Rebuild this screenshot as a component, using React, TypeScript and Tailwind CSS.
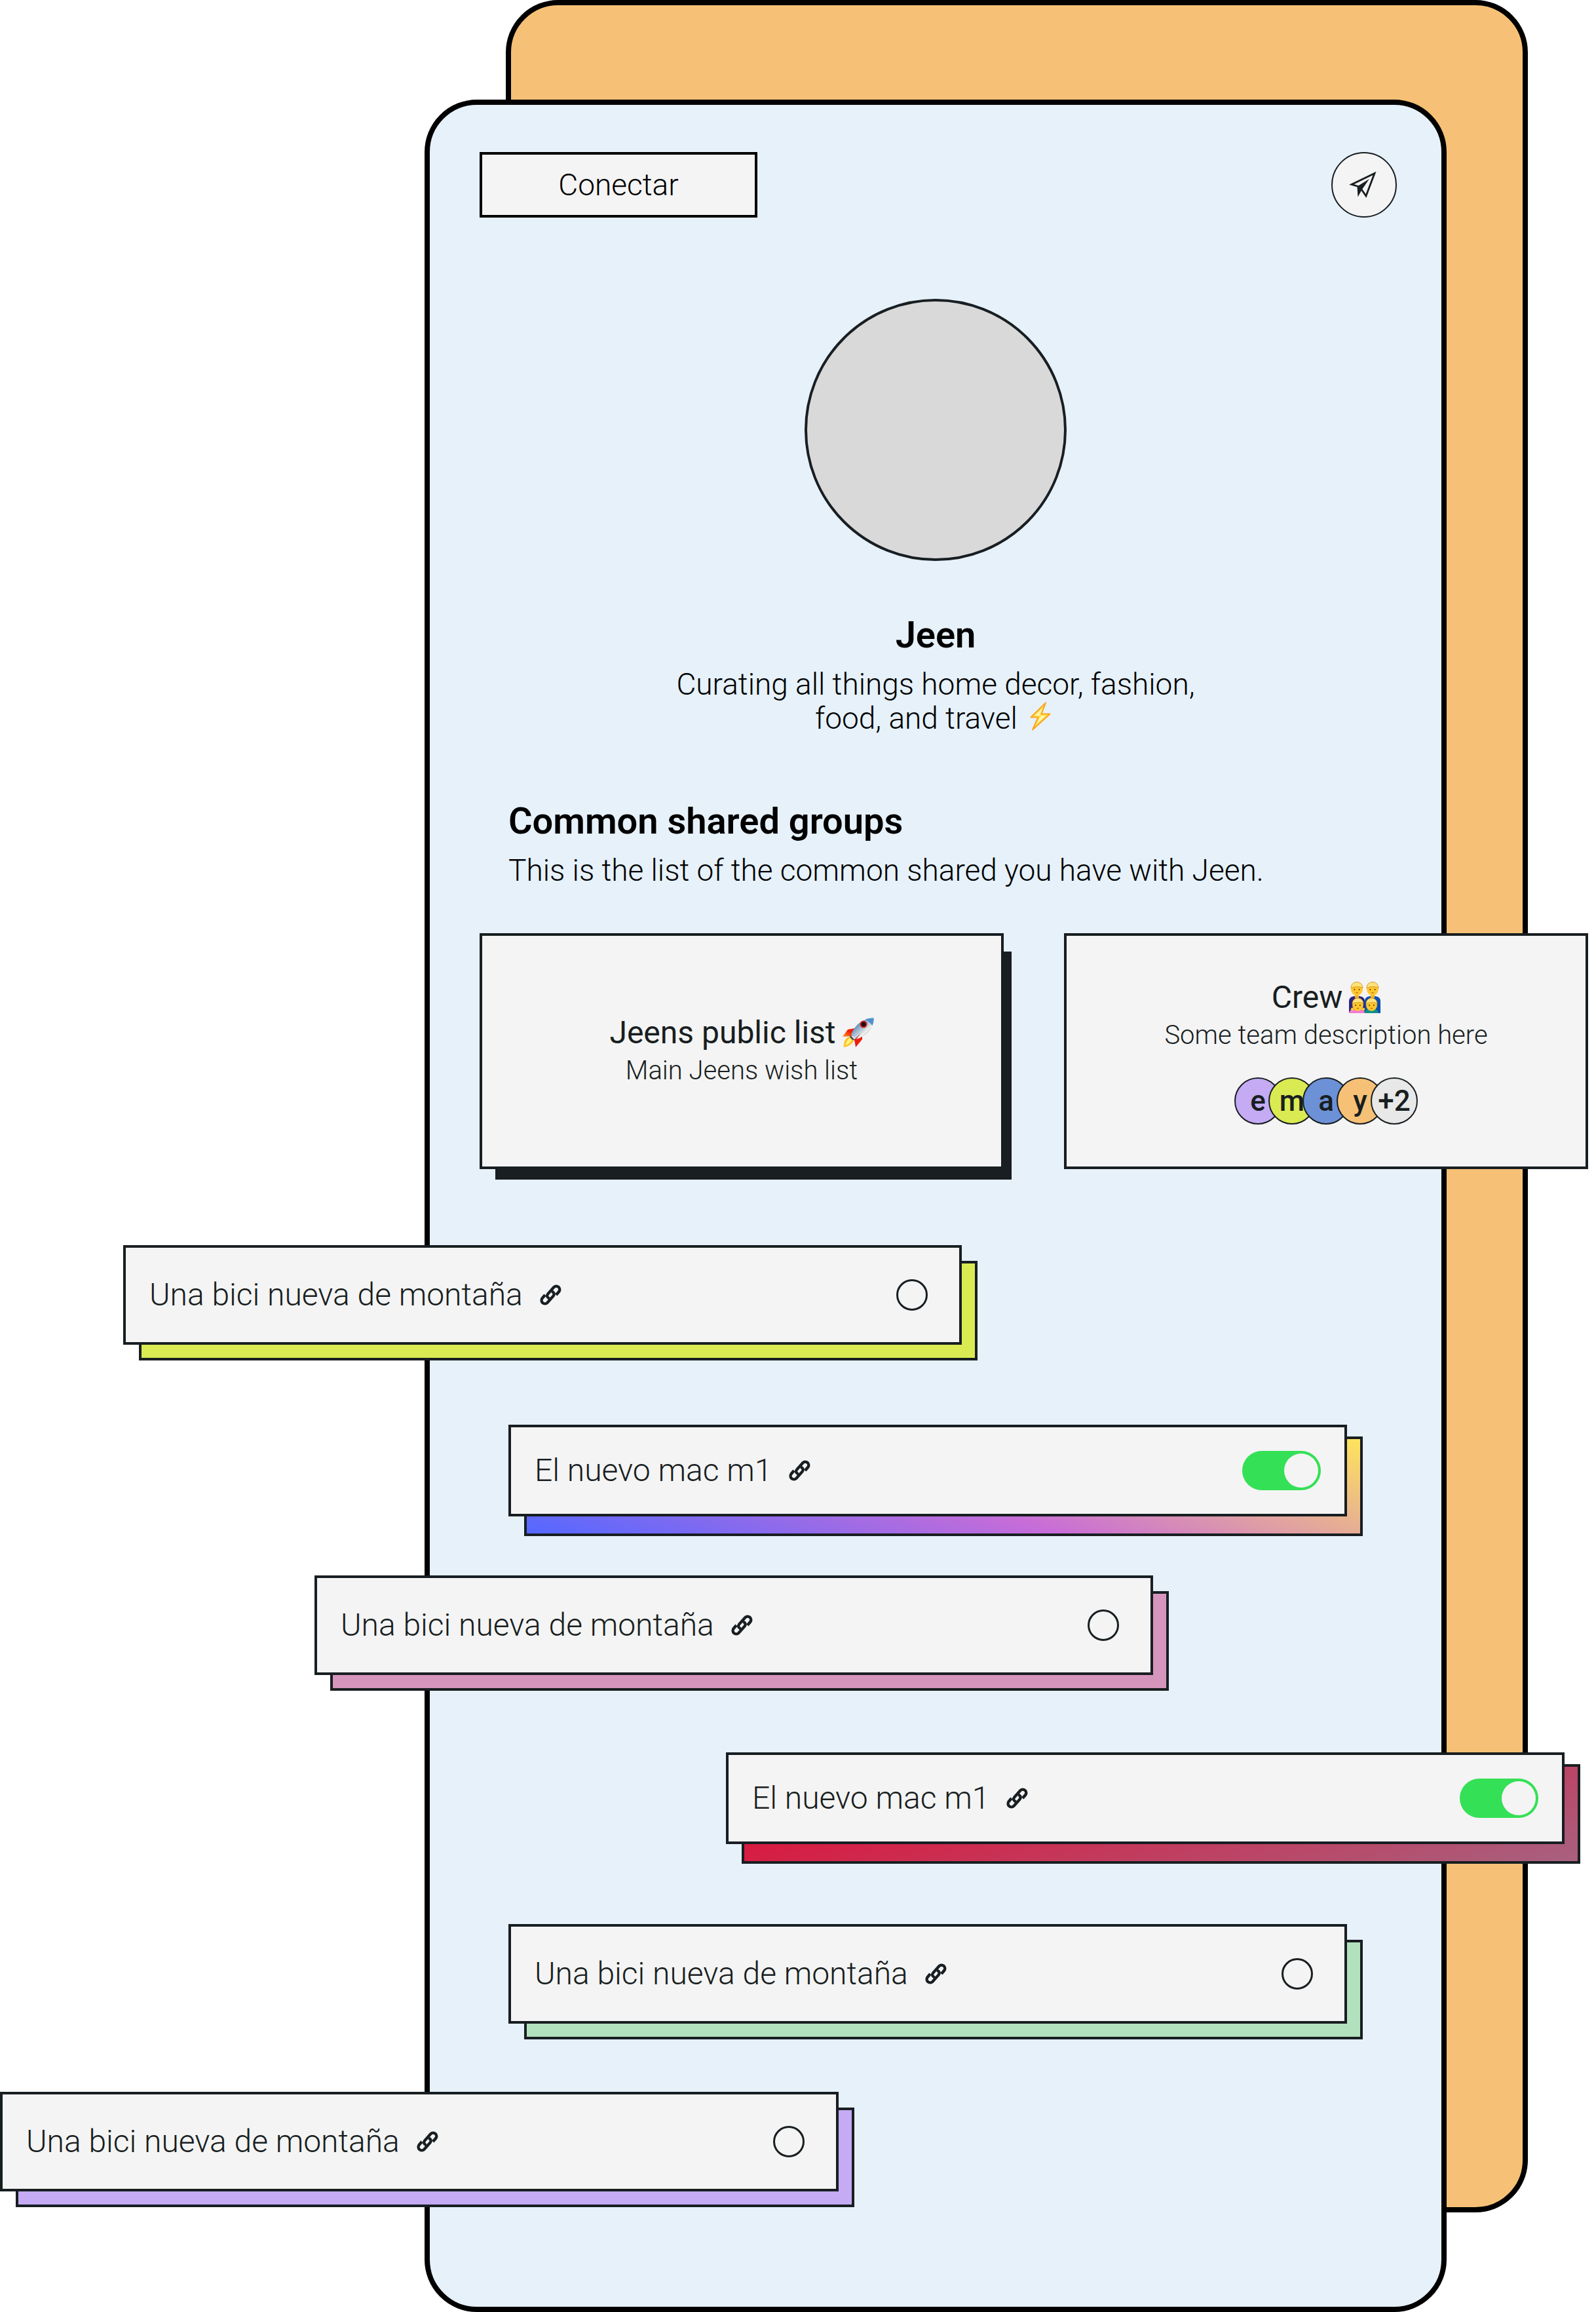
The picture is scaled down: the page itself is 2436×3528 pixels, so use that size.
import type { ReactNode } from "react";

const INK = "#181e21";

function PlaneIcon() {
  return (
    <svg viewBox="0 0 46 42" className="h-[42px] w-[46px]" fill="none" aria-hidden="true">
      <path d="M19 28 26 38 39 3.500 4 20.500 14 23.500" stroke={INK} strokeWidth="2.800" />
      <path d="M31 12 20 28 13.500 39.500 12.500 23.500Z" fill={INK} />
    </svg>
  );
}

function LinkIcon() {
  const half = "M14.500 21.500C11 19.800 10 17.300 12.300 14.400L21.500 4a5.200 5.200 0 0 1 7.800 6.800L24.800 16";
  return (
    <svg viewBox="0 0 33 32" className="h-[32px] w-[33px] shrink-0" fill="none" aria-hidden="true">
      <g stroke={INK} strokeWidth="4.400">
        <path d={half} />
        <path d={half} transform="rotate(180 16.400 16)" />
      </g>
    </svg>
  );
}

function BoltEmoji() {
  return (
    <svg viewBox="0 0 32 44" className="mx-2 -mt-2 inline-block h-[44px] w-[32px] align-[-3px]" role="img" aria-label="lightning">
      <path d="M24 1.500 1.500 23.500H12.500L4 42.500 30.500 18.500H17.500Z" fill="#ffe14a" stroke="#ffa41c" strokeWidth="2" strokeLinejoin="round" />
      <path d="M20 8 8 21h9L9 35 24 21H14.500Z" fill="#fff6b0" />
    </svg>
  );
}

function RocketEmoji() {
  return (
    <svg viewBox="0 0 48 46" className="h-[46px] w-[48px]" role="img" aria-label="rocket">
      <defs>
        <linearGradient id="hull" x1="0" y1="0" x2="1" y2="1">
          <stop offset="0.200" stopColor="#3f79ad" />
          <stop offset="0.500" stopColor="#b4c8d8" />
          <stop offset="0.650" stopColor="#f2f2ee" />
          <stop offset="0.850" stopColor="#4f7fa6" />
        </linearGradient>
        <linearGradient id="fin" x1="0" y1="1" x2="1" y2="0">
          <stop offset="0" stopColor="#ff9a1f" />
          <stop offset="0.600" stopColor="#f01d0a" />
        </linearGradient>
      </defs>
      <path d="M19 16 8 18 0 29l15-1Z" fill="url(#fin)" />
      <path d="M18 33l12-10v10L20 45Z" fill="#f01d0a" />
      <path d="M10 29c-6 2-9 9-8 16 7-1 13-5 15-10Z" fill="#ffc21f" />
      <path d="M11 31c-3 2-6 7-7 11 5-1 8-4 10-8Z" fill="#fff27a" />
      <path d="M47.500.5C33 1 19 9 13 26l7 7C35 29 49 16 47.500.5Z" fill="url(#hull)" />
      <path d="M47.500.5c-4.500 0-8.500.5-12.500 2 3 2 7.500 5 10.500 9.500 1.500-3.500 2.200-7.500 2-11.500Z" fill="#4f8fcc" />
      <circle cx="32" cy="10" r="4.500" fill="#1a1010" stroke="#d21b1b" strokeWidth="2" />
      <path d="M28 23 20 34l-3 1Z" fill="#c0140a" />
      <path d="M12 27l6 6-2 1.500-5-5Z" fill="#33465a" />
    </svg>
  );
}

function Head({ x, y, r }: { x: number; y: number; r: number }) {
  return (
    <g>
      <ellipse cx={x} cy={y} rx={r} ry={r * 1.150} fill="#ffc62b" />
      <path
        d={`M${x - r} ${y - 1}c0-${r * 1.400} ${r * 2}-${r * 1.400} ${r * 2} 0c-2-3-${r * 1.500}-3-${r * 2} 0Z`}
        fill="#ffe27a"
        stroke="#c98a12"
        strokeWidth="0.800"
      />
      <circle cx={x - r * 0.400} cy={y + 1} r="1" fill="#4a2b12" />
      <circle cx={x + r * 0.400} cy={y + 1} r="1" fill="#4a2b12" />
      <path d={`M${x - 1.500} ${y + r * 0.650}h3`} stroke="#8d4a12" strokeWidth="1" />
    </g>
  );
}

function FamilyEmoji() {
  return (
    <svg viewBox="0 0 48 48" className="size-[48px]" role="img" aria-label="family">
      <path d="M0 48V30c0-6 4-8 12-8s12 2 12 8v18Z" fill="#2b2483" />
      <path d="M24 48V30c0-6 4-8 12-8s12 2 12 8v18Z" fill="#0b4fb3" />
      <rect x="9" y="18" width="6" height="7" fill="#f2b01e" />
      <rect x="33" y="18" width="6" height="7" fill="#f2b01e" />
      <Head x={12} y={11} r={9} />
      <Head x={36} y={11} r={9} />
      <path d="M0 48c0-4 5-7 13-7s11 3 11 7Z" fill="#f27bd0" />
      <path d="M24 48c0-4 3-7 10-7s11 3 11 7Z" fill="#0d8f86" />
      <circle cx="5" cy="42" r="2.200" fill="#ffcb2e" />
      <circle cx="22" cy="42" r="2.200" fill="#ffcb2e" />
      <Head x={13.500} y={35} r={8.500} />
      <Head x={34.500} y={35} r={8.500} />
    </svg>
  );
}

function GroupCard({ title, emoji, text, children }: { title: string; emoji: ReactNode; text: string; children?: ReactNode }) {
  return (
    <article className="relative flex h-[360px] flex-col items-center justify-center border-4 border-[#181e21] bg-[#f4f4f4] text-[#181e21]">
      <h3 className="flex items-center gap-[10px] text-[48px] leading-[60px]">
        {title}
        {emoji}
      </h3>
      <p className="text-[40px] leading-[56px] font-light">{text}</p>
      {children}
    </article>
  );
}

const members = [
  { name: "e", color: "bg-[#c4abf4]" },
  { name: "m", color: "bg-[#daea52]" },
  { name: "a", color: "bg-[#6c91d6]" },
  { name: "y", color: "bg-[#f6c176]" },
  { name: "+2", color: "bg-[#e8e8e8]" },
];

type Wish = { id: string; label: string; kind: "radio" | "switch"; place: string; fill: string };

const wishes: Wish[] = [
  { id: "w1", label: "Una bici nueva de montaña", kind: "radio", place: "-ml-[468px] mr-[732px]", fill: "bg-[#daea52]" },
  { id: "w2", label: "El nuevo mac m1", kind: "switch", place: "mt-[122px] ml-[120px] mr-[144px]", fill: "bg-linear-[20deg,#5468ff_0%,#c86dd7_49%,#ffe45c_100%]" },
  { id: "w3", label: "Una bici nueva de montaña", kind: "radio", place: "mt-[90px] -ml-[176px] mr-[440px]", fill: "bg-[#d695bd]" },
  { id: "w4", label: "El nuevo mac m1", kind: "switch", place: "mt-[118px] ml-[452px] -mr-[188px]", fill: "bg-linear-[165deg,#e8032b_0%,#a8617f_100%]" },
  { id: "w5", label: "Una bici nueva de montaña", kind: "radio", place: "mt-[122px] ml-[120px] mr-[144px]", fill: "bg-[#b2e1be]" },
  { id: "w6", label: "Una bici nueva de montaña", kind: "radio", place: "mt-[104px] -ml-[656px] mr-[920px]", fill: "bg-[#c4abf4]" },
];

function WishRow({ wish }: { wish: Wish }) {
  const isSwitch = wish.kind === "switch";
  return (
    <li className={`relative ${wish.place}`}>
      <div
        className={`absolute left-6 -right-6 border-4 border-[#181e21] ${isSwitch ? "top-[18px] -bottom-[30px]" : "top-6 -bottom-6"} ${wish.fill}`}
      />
      <div
        className={`relative flex items-center justify-between border-4 border-[#181e21] bg-[#f4f4f4] pl-9 text-[#181e21] ${isSwitch ? "h-[140px] pr-9" : "h-[152px] pr-12"}`}
      >
        <div className="flex items-center gap-[26px]">
          <label htmlFor={wish.id} className="text-[48px] leading-[56px] font-light">
            {wish.label}
          </label>
          <LinkIcon />
        </div>
        {isSwitch ? (
          <input
            id={wish.id}
            type="checkbox"
            role="switch"
            defaultChecked
            className="h-[60px] w-[120px] appearance-none rounded-full bg-[#34e055] p-1 before:ml-auto before:block before:size-[52px] before:rounded-full before:bg-[#f4f4f4]"
          />
        ) : (
          <input
            id={wish.id}
            type="radio"
            name="wish"
            className="size-12 appearance-none rounded-full border-3 border-[#181e21] checked:bg-[#181e21]"
          />
        )}
      </div>
    </li>
  );
}

export default function App() {
  return (
    <div className="relative overflow-hidden bg-white pt-[152px] font-[Roboto,sans-serif] text-black">
      <div className="absolute top-0 right-[104px] bottom-[152px] left-[772px] rounded-[80px] border-8 border-black bg-[#f6c176]" />
      <main className="relative mr-[228px] ml-[648px] rounded-[80px] border-8 border-black bg-[#e6f1fa] pt-[72px] pb-[176px]">
        <header className="flex items-center justify-between pr-[68px] pl-[76px]">
          <button type="button" className="h-[100px] w-[424px] border-4 border-black bg-[#f4f4f4] text-[46px] leading-[52px] font-light">
            Conectar
          </button>
          <button
            type="button"
            aria-label="Enviar"
            className="flex size-[100px] items-center justify-center rounded-full border-2 border-[#181e21] bg-[#f4f4f4]"
          >
            <PlaneIcon />
          </button>
        </header>

        <section className="mt-[124px] flex flex-col items-center text-center">
          <div className="size-[400px] rounded-full border-4 border-[#181e21] bg-[#d9d9d9]" />
          <h1 className="mt-[80px] text-[56px] leading-[66px] font-semibold">Jeen</h1>
          <p className="mt-4 w-[900px] text-[46px] leading-[52px] font-light">
            Curating all things home decor, fashion,
            <br />
            food, and travel <BoltEmoji />
          </p>
        </section>

        <section className="mt-[98px]">
          <div className="pl-[120px]">
            <h2 className="text-[56px] leading-[66px] font-semibold">Common shared groups</h2>
            <p className="mt-4 text-[46px] leading-[52px] font-light">This is the list of the common shared you have with Jeen.</p>
          </div>
          <div className="mt-[70px] -mr-[224px] ml-[76px] grid grid-cols-2 gap-[92px]">
            <div className="relative">
              <div className="absolute top-7 -right-3 -bottom-4 left-6 bg-[#181e21]" />
              <GroupCard title="Jeens public list" emoji={<RocketEmoji />} text="Main Jeens wish list" />
            </div>
            <GroupCard title="Crew" emoji={<FamilyEmoji />} text="Some team description here">
              <ul className="mt-9 flex -space-x-5">
                {members.map((m) => (
                  <li
                    key={m.name}
                    className={`flex size-[72px] items-center justify-center rounded-full border-2 border-[#181e21] text-[44px] leading-[52px] font-medium ${m.color}`}
                  >
                    {m.name}
                  </li>
                ))}
              </ul>
            </GroupCard>
          </div>
        </section>

        <ul className="mt-[116px]">
          {wishes.map((w) => (
            <WishRow key={w.id} wish={w} />
          ))}
        </ul>
      </main>
    </div>
  );
}
